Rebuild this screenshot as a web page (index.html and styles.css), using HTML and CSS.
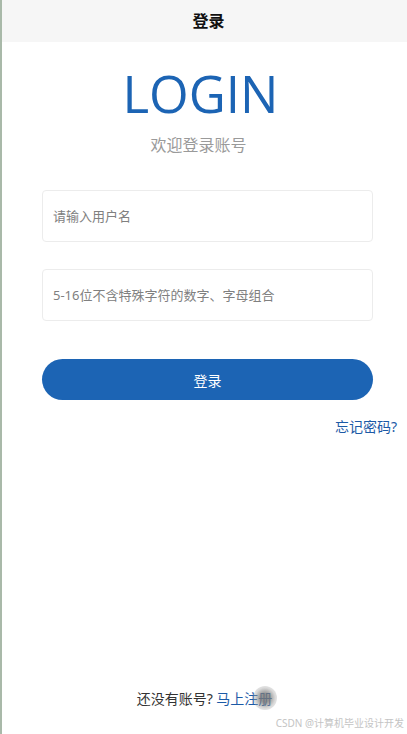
FILE: index.html
```html
<!DOCTYPE html>
<html lang="zh-CN">
<head>
  <meta charset="UTF-8" />
  <meta name="viewport" content="width=device-width, initial-scale=1" />
  <title>登录</title>
  <link rel="stylesheet" href="styles.css">
</head>
<body>
  <div class="page">
    <div class="header">登录</div>

    <div class="main">
      <h1 class="logo">LOGIN</h1>
      <p class="welcome">欢迎登录账号</p>

      <!-- login form -->
      <form class="login-form" onsubmit="return false">
        <input type="text" class="field" placeholder="请输入用户名" />
        <input type="password" class="field" placeholder="5-16位不含特殊字符的数字、字母组合" />
        <button type="submit" class="btn-login">登录</button>
      </form>

      <div class="forget"><a href="#">忘记密码?</a></div>
    </div>

    <div class="footer">
      还没有账号? <a href="#">马上注册</a>
      <span class="cursor-dot"></span>
    </div>

    <div class="watermark">CSDN @计算机毕业设计开发</div>
  </div>
</body>
</html>
```

FILE: styles.css
```css
body {
  margin: 0;
  font-family: "Noto Sans", "Noto Sans CJK SC", sans-serif;
  color: #333;
  background-color: #fff;
}
.page {
  position: relative;
  min-height: 734px;
  display: flex;
  flex-direction: column;
  border-left: 2px solid #a9b9a9;
  box-sizing: border-box;
}
.header {
  height: 42px;
  line-height: 42px;
  padding-left: 8px;
  background-color: #f6f6f6;
  text-align: center;
  font-size: 16px;
  font-weight: bold;
  color: #111;
}
.main {
  flex: 1;
  display: flex;
  flex-direction: column;
  padding: 0 10px 0 40px;
}
.logo {
  margin: 20px 0 0;
  padding-right: 38px;
  text-align: center;
  font-family: "Open Sans", "Noto Sans", sans-serif;
  font-weight: normal;
  font-size: 51px;
  line-height: 62px;
  color: #1c64b4;
}
.welcome {
  margin: 8px 0 0;
  padding-right: 42px;
  text-align: center;
  font-size: 16px;
  color: #9a9a9a;
}
.login-form {
  display: flex;
  flex-direction: column;
  margin-top: 34px;
  width: 331px;
}
.field {
  height: 52px;
  box-sizing: border-box;
  border: 1px solid #ececec;
  border-radius: 4px;
  padding: 0 10px;
  margin-bottom: 27px;
  font-family: "Noto Sans", "Noto Sans CJK SC", sans-serif;
  font-size: 13px;
  color: #333;
  outline: none;
}
.field::placeholder {
  color: #808080;
}
.btn-login {
  margin-top: 11px;
  height: 41px;
  border: none;
  border-radius: 21px;
  background-color: #1c64b4;
  color: #fff;
  font-family: "Noto Sans", "Noto Sans CJK SC", sans-serif;
  font-size: 14px;
  cursor: pointer;
}
.forget {
  margin-top: 16px;
  text-align: right;
  font-size: 14px;
}
.forget a,
.footer a {
  color: #1c5aa6;
  text-decoration: none;
}
.footer {
  position: relative;
  text-align: center;
  font-size: 14px;
  color: #333;
  padding-bottom: 26px;
}
.cursor-dot {
  position: absolute;
  left: 251px;
  top: -2px;
  width: 24px;
  height: 24px;
  border-radius: 50%;
  background: radial-gradient(circle, rgba(120,120,120,0.8) 25%, rgba(160,160,160,0.4) 60%, rgba(200,200,200,0) 100%);
}
.watermark {
  position: absolute;
  right: 3px;
  bottom: 4px;
  font-size: 10px;
  color: #c4c4c4;
}
```
